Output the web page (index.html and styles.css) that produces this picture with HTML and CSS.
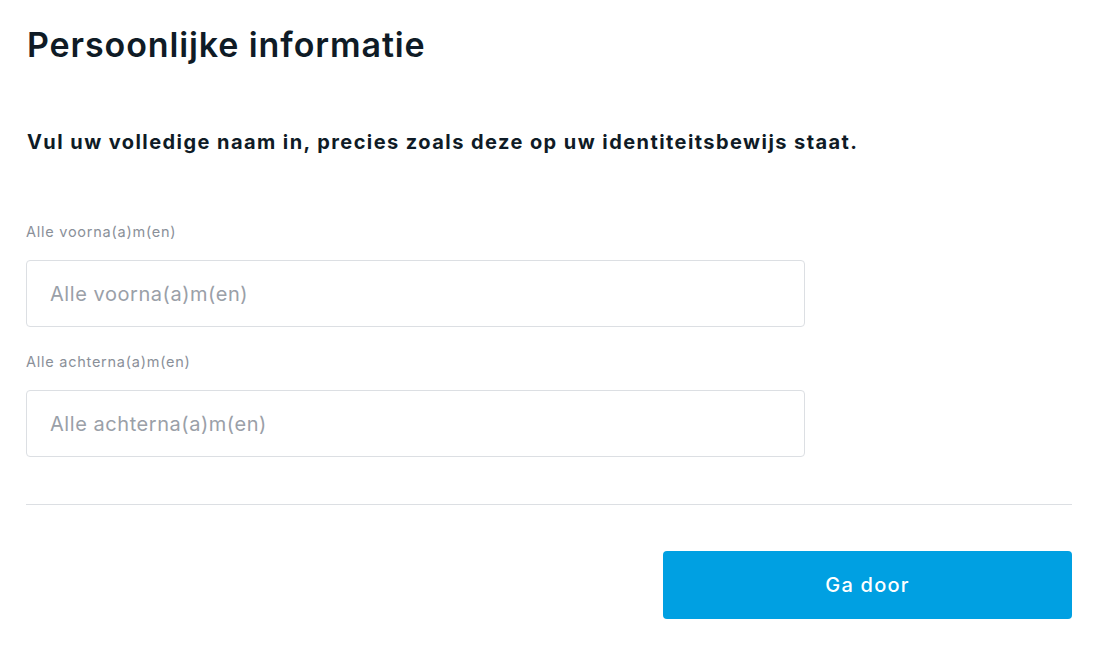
FILE: index.html
```html
<!DOCTYPE html>
<html lang="nl">
<head>
<meta charset="utf-8">
<title>Persoonlijke informatie</title>
<link rel="stylesheet" href="styles.css">
</head>
<body>
<main class="page">
  <h1 class="title">Persoonlijke informatie</h1>
  <p class="intro">Vul uw volledige naam in, precies zoals deze op uw identiteitsbewijs staat.</p>
  <form class="form">
    <div class="field">
      <label class="label" for="first">Alle voorna(a)m(en)</label>
      <input class="input" id="first" type="text" placeholder="Alle voorna(a)m(en)">
    </div>
    <div class="field">
      <label class="label" for="last">Alle achterna(a)m(en)</label>
      <input class="input" id="last" type="text" placeholder="Alle achterna(a)m(en)">
    </div>
    <hr class="divider">
    <div class="actions">
      <button class="button" type="button">Ga door</button>
    </div>
  </form>
</main>
</body>
</html>
```
FILE: styles.css
```css
* { box-sizing: border-box; }
html, body { margin: 0; padding: 0; background: #fff; }
body {
  font-family: Inter, "Liberation Sans", sans-serif;
  color: #0f1b26;
}
.page {
  padding: 23px 28px 0 26px;
}
.title {
  margin: 0;
  padding-left: 1px;
  font-size: 34px;
  line-height: 44px;
  font-weight: 600;
  letter-spacing: 0.9px;
  color: #0f1b26;
}
.intro {
  margin: 62px 0 0 1px;
  font-size: 20px;
  line-height: 26px;
  font-weight: 700;
  letter-spacing: 1.43px;
  color: #0f1b26;
}
.form {
  margin-top: 68px;
  display: flex;
  flex-direction: column;
}
.field {
  display: flex;
  flex-direction: column;
  width: 779px;
  margin-bottom: 26px;
}
.label {
  font-size: 14.5px;
  line-height: 18px;
  color: #8a9099;
  margin-bottom: 19px;
  letter-spacing: 0.75px;
}
.input {
  height: 67px;
  border: 1px solid #dcdfe3;
  border-radius: 4px;
  padding: 0 23px;
  font-family: inherit;
  font-size: 20px;
  letter-spacing: 0.55px;
  color: #0f1b26;
  outline: none;
}
.input::placeholder { color: #9aa0a8; }
.divider {
  margin: 21px 0 0 0;
  border: 0;
  border-top: 1px solid #dcdfe3;
  width: 1046px;
}
.actions {
  width: 1046px;
  display: flex;
  justify-content: flex-end;
  margin-top: 46px;
}
.button {
  width: 409px;
  height: 68px;
  border: 0;
  border-radius: 4px;
  background: #00a0e2;
  color: #fff;
  font-family: inherit;
  font-size: 20px;
  font-weight: 500;
  letter-spacing: 1.2px;
  cursor: pointer;
}
```
